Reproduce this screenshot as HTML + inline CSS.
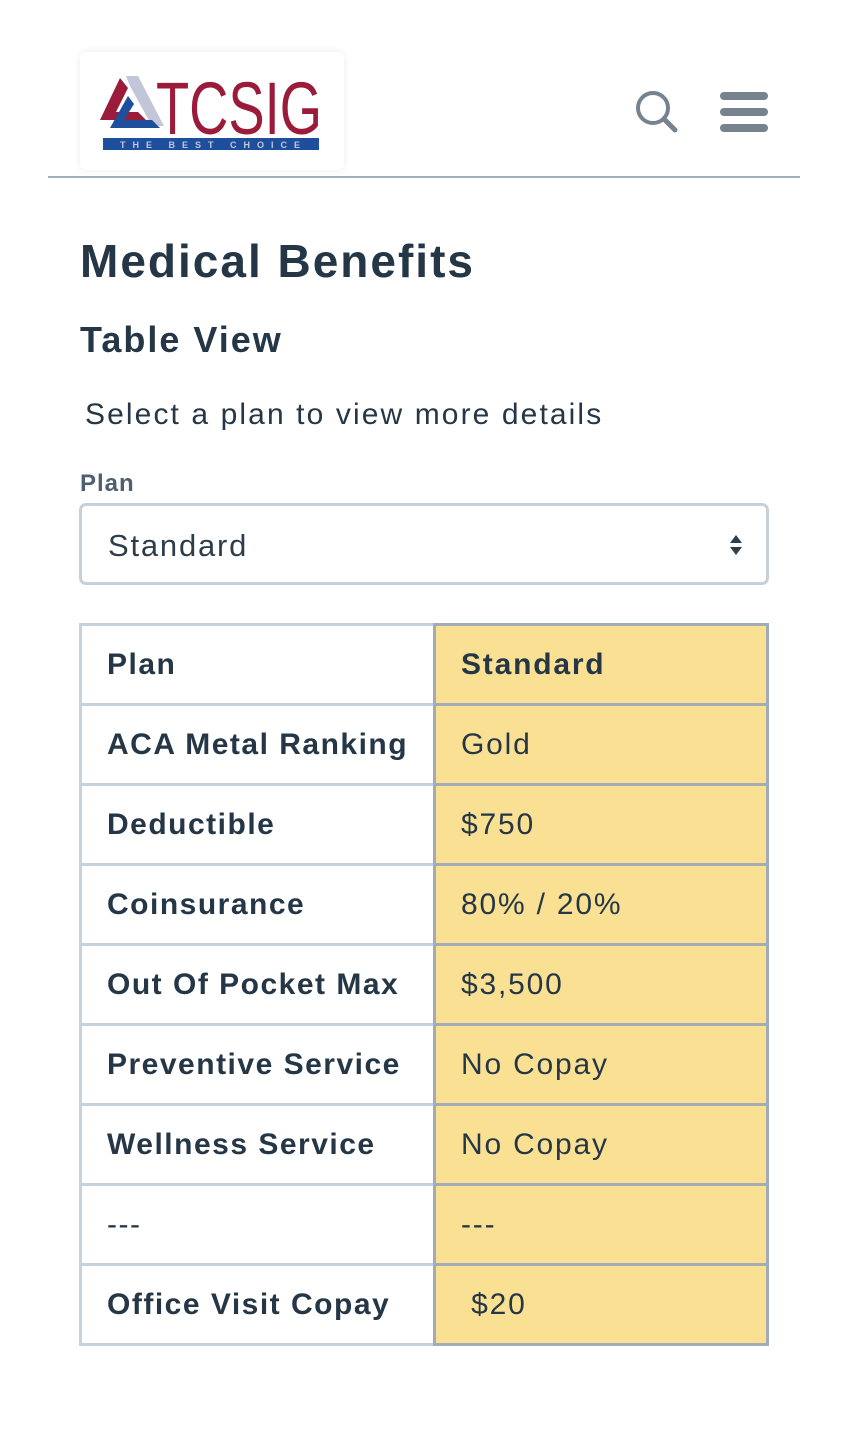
<!DOCTYPE html>
<html><head><meta charset="utf-8"><style>
*{margin:0;padding:0;box-sizing:border-box}
body{width:848px;height:1439px;background:#fff;font-family:"Liberation Sans",sans-serif;color:#253746;position:relative;overflow:hidden}
.abs{position:absolute}
.logo{left:80px;top:52px;width:264px;height:118px;background:#fff;border-radius:6px;box-shadow:0 0 8px rgba(0,0,0,.08)}
.hr{left:48px;top:176px;width:752px;height:2px;background:#a3aeb8}
h1{position:absolute;left:80px;top:234px;font-size:46px;font-weight:bold;letter-spacing:2px}
h2{position:absolute;left:80px;top:319px;font-size:36px;font-weight:bold;letter-spacing:2px}
.sub{left:85px;top:398px;font-size:30px;color:#253746;letter-spacing:2.1px}
.lbl{left:80px;top:470px;font-size:24px;font-weight:bold;color:#4f5f6e;letter-spacing:1px}
.sel{left:79px;top:503px;width:690px;height:82px;border:3px solid #c6d0d8;border-radius:7px}
.sel span{position:absolute;left:26px;top:22px;font-size:31px;color:#2e3d4b;letter-spacing:1.8px}
.row{position:absolute;left:79px;width:690px;height:80px}
.c1{position:absolute;left:0;top:0;width:357px;height:83px;border:3px solid #c6d2dc;font-weight:bold;font-size:30px;padding:22px 0 0 25px;letter-spacing:1.5px;white-space:nowrap}
.c2{position:absolute;left:354px;top:0;width:336px;height:83px;border:3px solid #a0adb8;background:#f9e092;font-size:30px;padding:22px 0 0 25px;white-space:nowrap;letter-spacing:1.8px}
</style></head><body>
<div class="abs logo">
<svg width="264" height="118" viewBox="0 0 264 118">
<polygon points="40,26 20,68 66,68 58,60 36,60 48,36" fill="#9b1b3a"/>
<polygon points="58,24 84,74 72,74 50,34 46,24" fill="#c2c6d8"/>
<polygon points="48,44 30,76 80,76 72,68 44,68 54,52" fill="#1e4f9c"/>
<text x="76" y="82" font-family="Liberation Sans" font-size="74" fill="#9b1b3a" textLength="166" lengthAdjust="spacingAndGlyphs">TCSIG</text>
<rect x="23" y="86" width="216" height="12" fill="#1e4f9c"/>
<text x="40" y="96" font-family="Liberation Sans" font-size="9" font-weight="bold" fill="#c2c6d8" textLength="180" lengthAdjust="spacing">THE BEST CHOICE</text>
</svg></div>
<svg class="abs" style="left:632px;top:88px" width="50" height="50" viewBox="0 0 50 50"><circle cx="21" cy="20" r="15" fill="none" stroke="#76838f" stroke-width="4"/><line x1="32" y1="31" x2="43" y2="42" stroke="#76838f" stroke-width="5" stroke-linecap="round"/></svg>
<div class="abs" style="left:720px;top:92px;width:48px;height:8px;border-radius:4px;background:#76838f"></div>
<div class="abs" style="left:720px;top:108px;width:48px;height:8px;border-radius:4px;background:#76838f"></div>
<div class="abs" style="left:720px;top:124px;width:48px;height:8px;border-radius:4px;background:#76838f"></div>
<div class="abs hr"></div>
<h1>Medical Benefits</h1>
<h2>Table View</h2>
<div class="abs sub">Select a plan to view more details</div>
<div class="abs lbl">Plan</div>
<div class="abs sel"><span>Standard</span>
<svg style="position:absolute;right:24px;top:28px" width="12" height="22" viewBox="0 0 12 22"><polygon points="6,1 12,9 0,9" fill="#2e3d4b"/><polygon points="0,13 12,13 6,21" fill="#2e3d4b"/></svg></div>
<div class="row" style="top:623px"><div class="c1">Plan</div><div class="c2" style="font-weight:bold">Standard</div></div>
<div class="row" style="top:703px"><div class="c1">ACA Metal Ranking</div><div class="c2">Gold</div></div>
<div class="row" style="top:783px"><div class="c1">Deductible</div><div class="c2">$750</div></div>
<div class="row" style="top:863px"><div class="c1">Coinsurance</div><div class="c2">80% / 20%</div></div>
<div class="row" style="top:943px"><div class="c1">Out Of Pocket Max</div><div class="c2">$3,500</div></div>
<div class="row" style="top:1023px"><div class="c1">Preventive Service</div><div class="c2">No Copay</div></div>
<div class="row" style="top:1103px"><div class="c1">Wellness Service</div><div class="c2">No Copay</div></div>
<div class="row" style="top:1183px"><div class="c1" style="font-weight:normal">---</div><div class="c2">---</div></div>
<div class="row" style="top:1263px"><div class="c1">Office Visit Copay</div><div class="c2">&nbsp;$20</div></div>
</body></html>
